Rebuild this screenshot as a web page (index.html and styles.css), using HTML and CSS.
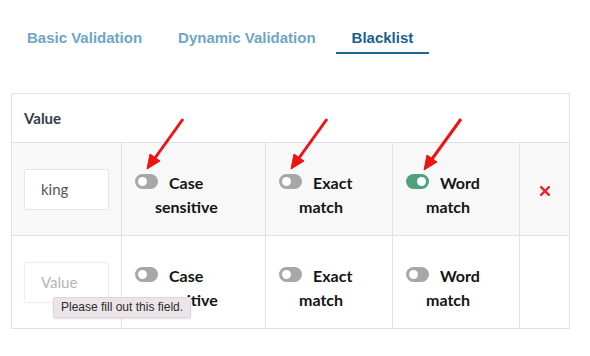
FILE: index.html
```html
<!DOCTYPE html>
<html>
<head>
    <meta charset="UTF-8">
    <title>Blacklist</title>
    <link rel="stylesheet" href="styles.css">
</head>
<body>
    <div class="page">
        <nav class="tabs">
            <a class="tab">Basic Validation</a>
            <a class="tab">Dynamic Validation</a>
            <a class="tab active">Blacklist</a>
        </nav>

        <table class="rules">
            <colgroup>
                <col class="col-value">
                <col class="col-case">
                <col class="col-opt">
                <col class="col-opt">
                <col class="col-remove">
            </colgroup>
            <thead>
                <tr>
                    <th colspan="5">Value</th>
                </tr>
            </thead>
            <tbody>
                <tr class="striped">
                    <td class="value-cell">
                        <input type="text" class="value-input" value="king">
                    </td>
                    <td>
                        <label class="option"><span class="toggle"></span>Case sensitive</label>
                    </td>
                    <td>
                        <label class="option"><span class="toggle"></span>Exact match</label>
                    </td>
                    <td>
                        <label class="option"><span class="toggle on"></span>Word match</label>
                    </td>
                    <td class="remove-cell">
                        <svg class="remove" width="10" height="10" viewBox="0 0 10 10">
                            <path d="M1.2 1.2 L8.8 8.8 M8.8 1.2 L1.2 8.8" stroke="#f0232b" stroke-width="2.4" stroke-linecap="square"/>
                        </svg>
                    </td>
                </tr>
                <tr>
                    <td class="value-cell">
                        <div class="input-wrap">
                            <input type="text" class="value-input empty" placeholder="Value">
                            <div class="tooltip">Please fill out this field.</div>
                        </div>
                    </td>
                    <td>
                        <label class="option"><span class="toggle"></span>Case sensitive</label>
                    </td>
                    <td>
                        <label class="option"><span class="toggle"></span>Exact match</label>
                    </td>
                    <td>
                        <label class="option"><span class="toggle"></span>Word match</label>
                    </td>
                    <td class="remove-cell"></td>
                </tr>
            </tbody>
        </table>

        <!-- annotation arrows -->
        <svg class="arrows" width="590" height="356" viewBox="0 0 590 356">
            <g stroke="#ee1414" stroke-width="3" fill="#ee1414">
                <line x1="183" y1="119" x2="155" y2="158"/>
                <polygon points="147,169 160,161 150,154" stroke-width="1"/>
                <line x1="327" y1="119" x2="299" y2="158"/>
                <polygon points="291,169 304,161 294,154" stroke-width="1"/>
                <line x1="461" y1="119" x2="432" y2="159"/>
                <polygon points="424,170 437,162 427,155" stroke-width="1"/>
            </g>
        </svg>
    </div>
</body>
</html>
```

FILE: styles.css
```css
* {
    margin: 0;
    padding: 0;
    box-sizing: border-box;
}

body {
    background: #fff;
    font-family: 'Lato', 'Liberation Sans', sans-serif;
}

.page {
    position: relative;
    width: 590px;
    height: 356px;
    overflow: hidden;
}

.tabs {
    display: flex;
    gap: 4px;
    padding: 29px 0 0 11px;
}

.tab {
    font-family: 'Liberation Sans', Arial, sans-serif;
    font-size: 15px;
    font-weight: 700;
    line-height: 17px;
    color: #6fa5c5;
    padding: 0 16px 6px;
    border-bottom: 2px solid transparent;
}

.tab.active {
    color: #1c5f8e;
    border-bottom-color: #1a6496;
}

.rules {
    margin: 39px 0 0 11px;
    width: 558px;
    border-collapse: collapse;
    table-layout: fixed;
    border: 1px solid #dfe3e7;
}

.col-value { width: 110px; }
.col-case { width: 144px; }
.col-opt { width: 127px; }
.col-remove { width: 50px; }

.rules th {
    height: 49px;
    padding: 0 12px;
    text-align: left;
    font-size: 15px;
    font-weight: 700;
    color: #333c46;
    border-bottom: 1px solid #dfe3e7;
}

.rules td {
    height: 93px;
    padding: 0 12px 0 13px;
    border: 1px solid #dfe3e7;
    vertical-align: middle;
}

.striped td {
    background: #f8f8f8;
}

.rules td.value-cell {
    padding: 0 12px;
}

.input-wrap {
    position: relative;
}

.value-input {
    display: block;
    width: 85px;
    height: 41px;
    padding: 0 16px;
    border: 1px solid #e4e7ea;
    border-radius: 2px;
    background: #fff;
    font-family: 'Lato', sans-serif;
    font-size: 15px;
    color: #555;
    outline: none;
}

.value-input.empty {
    border-color: #eeeeee;
    box-shadow: 0 0 2px rgba(0, 0, 0, 0.06);
}

.value-input::placeholder {
    color: #aeb6be;
}

.tooltip {
    position: absolute;
    left: 29px;
    top: 35px;
    width: 138px;
    height: 21px;
    padding: 0 7px;
    background: #ebe4e9;
    border: 1px solid #ddd5da;
    border-radius: 2px;
    box-shadow: 0 1px 2px rgba(0, 0, 0, 0.12);
    font-family: 'Liberation Sans', Arial, sans-serif;
    font-size: 12px;
    line-height: 19px;
    color: #2b2b2b;
    white-space: nowrap;
}

.option {
    display: block;
    margin-top: 11px;
    padding-left: 20px;
    font-size: 16px;
    font-weight: 700;
    line-height: 24px;
    color: #141414;
}

.toggle {
    position: relative;
    display: inline-block;
    width: 23px;
    height: 15px;
    margin: 0 11px 0 -20px;
    border-radius: 8px;
    background: #a7a7a7;
}

.toggle::after {
    content: "";
    position: absolute;
    left: 3px;
    top: 3px;
    width: 9px;
    height: 9px;
    border-radius: 50%;
    background: #fff;
}

.toggle.on {
    background: #4fa27f;
}

.toggle.on::after {
    left: 11px;
}

.rules td.remove-cell {
    padding: 0;
    text-align: center;
}

.remove {
    display: inline-block;
    vertical-align: middle;
}

.arrows {
    position: absolute;
    left: 0;
    top: 0;
    pointer-events: none;
}
```
